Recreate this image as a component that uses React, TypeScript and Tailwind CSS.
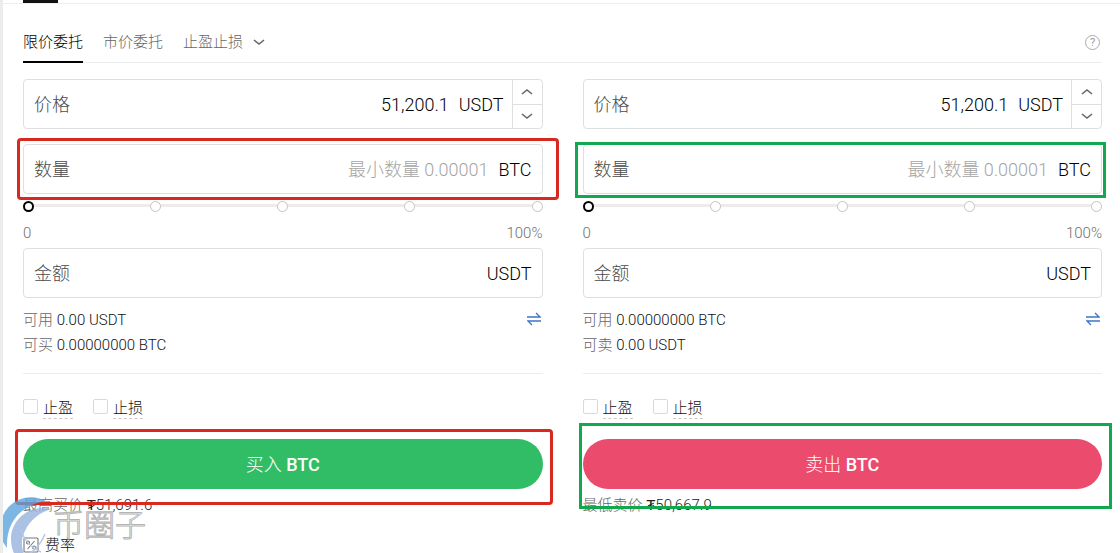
import { useState } from "react";

interface OrderSide {
  id: string;
  available: string;
  maxLabel: string;
  max: string;
  limitLabel: string;
  limit: string;
  action: string;
  buttonClass: string;
  amountMark: string;
  buttonMark: string;
}

const SIDES: OrderSide[] = [
  {
    id: "buy",
    available: "0.00 USDT",
    maxLabel: "可买",
    max: "0.00000000 BTC",
    limitLabel: "最高买价",
    limit: "₮51,691.6",
    action: "买入",
    buttonClass: "bg-[#31bd65]",
    amountMark: "-left-1.5 -right-4 -top-1.5 -bottom-1.5 rounded-sm border-[#d8281f]",
    buttonMark: "-left-2 -right-2.5 -top-2.5 -bottom-4 rounded-sm border-[#d8281f]",
  },
  {
    id: "sell",
    available: "0.00000000 BTC",
    maxLabel: "可卖",
    max: "0.00 USDT",
    limitLabel: "最低卖价",
    limit: "₮50,667.9",
    action: "卖出",
    buttonClass: "bg-[#eb4b6d]",
    amountMark: "-left-2 -right-1 -top-0.5 -bottom-1 border-[#12a84f]",
    buttonMark: "-left-1 -right-2.5 -top-4 -bottom-5 border-[#12a84f]",
  },
];

function Chevron({ up = false }: { up?: boolean }) {
  return (
    <svg viewBox="0 0 12 8" className="h-2 w-3" fill="none" stroke="currentColor" strokeWidth="1.6">
      <path d={up ? "M1 6 6 2l5 4" : "M1 2l5 4 5-4"} />
    </svg>
  );
}

function SwapIcon() {
  return (
    <svg viewBox="0 0 14 14" className="h-3.5 w-3.5" fill="none" stroke="#3d76c9" strokeWidth="1.3">
      <path d="M0 5h13L9 1M14 9H1l4 4" />
    </svg>
  );
}

function Slider({ id }: { id: string }) {
  const [value, setValue] = useState(0);

  return (
    <div className="mt-1.5">
      <div className="relative flex h-3 items-center justify-between">
        <div className="absolute inset-x-1 top-1 h-[3px] bg-[#efebec]" />
        {[0, 25, 50, 75, 100].map((stop) => (
          <span
            key={stop}
            className={
              stop === value
                ? "relative h-[11px] w-[11px] rounded-full border-2 border-black bg-white"
                : "relative h-[11px] w-[11px] rounded-full border border-[#c4c4c4] bg-white"
            }
          />
        ))}
        <input
          type="range"
          min={0}
          max={100}
          step={25}
          value={value}
          onChange={(e) => setValue(Number(e.target.value))}
          aria-label={`${id} percent`}
          className="absolute inset-0 w-full cursor-pointer opacity-0"
        />
      </div>
      <div className="mt-[11px] flex justify-between text-[15px] leading-5 text-[#707070]">
        <span>0</span>
        <span>100%</span>
      </div>
    </div>
  );
}

function OrderForm({ side }: { side: OrderSide }) {
  const [price, setPrice] = useState("51,200.1");
  const box = "flex h-[50px] items-center rounded border border-[#dfdfdf] text-lg";
  const label = "shrink-0 pt-0.5 pl-2.5 text-[#4a4a4a]";
  const field =
    "min-w-0 flex-1 bg-transparent pt-0.5 text-right outline-none placeholder:text-[#a5a5a5]";

  return (
    <form className="min-w-0 flex-1" onSubmit={(e) => e.preventDefault()}>
      <div className={box}>
        <label htmlFor={`${side.id}-price`} className={label}>
          价格
        </label>
        <input
          id={`${side.id}-price`}
          value={price}
          onChange={(e) => setPrice(e.target.value)}
          className={field}
        />
        <span className="pt-0.5 pr-2 pl-2.5">USDT</span>
        <div className="flex h-full w-[30px] flex-col border-l border-[#dfdfdf] text-[#666]">
          <button type="button" aria-label="+" className="flex flex-1 items-center justify-center">
            <Chevron up />
          </button>
          <button
            type="button"
            aria-label="-"
            className="flex flex-1 items-center justify-center border-t border-[#dfdfdf]"
          >
            <Chevron />
          </button>
        </div>
      </div>

      <div className="relative mt-[15px]">
        <div className={box}>
          <label htmlFor={`${side.id}-size`} className={label}>
            数量
          </label>
          <input id={`${side.id}-size`} placeholder="最小数量 0.00001" className={field} />
          <span className="px-2.5 pt-0.5">BTC</span>
        </div>
        <div className={`pointer-events-none absolute border-3 ${side.amountMark}`} />
      </div>

      <Slider id={side.id} />

      <div className={`mt-[5px] ${box}`}>
        <label htmlFor={`${side.id}-total`} className={label}>
          金额
        </label>
        <input id={`${side.id}-total`} className={field} />
        <span className="px-2.5 pt-0.5">USDT</span>
      </div>

      <div className="mt-2.5 flex items-start justify-between text-[15px] leading-[25px] text-[#111]">
        <div>
          <p>
            <span className="text-[#666]">可用</span> {side.available}
          </p>
          <p>
            <span className="text-[#666]">{side.maxLabel}</span> {side.max}
          </p>
        </div>
        <button type="button" aria-label="划转" className="mt-1 mr-0.5">
          <SwapIcon />
        </button>
      </div>

      <hr className="mt-[15px] border-[#ececec]" />

      <div className="mt-[23px] flex gap-5 text-[15px] leading-5 text-[#111]">
        {["止盈", "止损"].map((name) => (
          <label key={name} className="flex items-start gap-[5px]">
            <input
              type="checkbox"
              className="mt-0.5 h-[15px] w-[15px] appearance-none rounded-xs border border-[#d9d9d9] checked:bg-black"
            />
            <span className="border-b border-dashed border-[#c8c8c8] pt-px">{name}</span>
          </label>
        ))}
      </div>

      <div className="relative mt-5">
        <button
          type="submit"
          className={`h-[50px] w-full rounded-full pt-0.5 text-lg text-white ${side.buttonClass}`}
        >
          {side.action} <span className="font-medium">BTC</span>
        </button>
        <div className={`pointer-events-none absolute z-10 border-3 ${side.buttonMark}`} />
      </div>

      <p className="mt-1.5 text-[15px] leading-5 text-[#222]">
        <span className="text-[#666]">{side.limitLabel}</span> {side.limit}
      </p>
    </form>
  );
}

function Watermark() {
  return (
    <div className="pointer-events-none absolute -bottom-2 -left-1 z-20 flex items-center">
      <svg viewBox="0 0 52 64" className="h-16 w-[52px]" fill="none">
        <path d="M47 4C31-5 8 2 2 24c-3 10 0 20 6 27C7 30 17 9 47 4Z" fill="#5ba4df" opacity=".8" />
        <path d="M52 12C30 7 12 23 12 42c0 9 3 16 8 22h9c-7-10-8-21-3-30 5-11 14-18 26-22Z" fill="#96b3df" opacity=".8" />
        <path d="M22 33c4 12 10 18 20 22M46 37c-5 12-12 19-22 23" stroke="#b4c8e8" strokeWidth="1.5" />
      </svg>
      <span className="pb-2 pl-0.5 text-[31px] leading-none text-white/60 [-webkit-text-stroke:1px_#b4b4b4]">
        币圈子
      </span>
    </div>
  );
}

export default function App() {
  return (
    <div className="relative h-screen overflow-hidden border-l-3 border-[#ececec] bg-white font-['Roboto','Noto_Sans_CJK_SC',sans-serif] font-light text-black">
      <div className="h-1 border-b border-[#eee] pl-5">
        <div className="h-[3px] w-[35px] bg-[#111]" />
      </div>

      <div className="pr-[18px] pl-5">
        <nav className="mt-[25px] flex items-start gap-5 border-b border-[#ececec] text-[15px] leading-[26px] text-[#666]">
          <button className="-mb-px border-b-2 border-black pb-1.5 text-black">限价委托</button>
          <button>市价委托</button>
          <button className="flex items-center gap-2.5">
            止盈止损
            <Chevron />
          </button>
          <button
            aria-label="帮助"
            className="mt-1.5 mr-0.5 ml-auto flex h-[15px] w-[15px] items-center justify-center rounded-full border border-[#aaa] text-[11px] leading-none font-normal text-[#999]"
          >
            ?
          </button>
        </nav>

        <div className="mt-4 flex gap-10">
          {SIDES.map((side) => (
            <OrderForm key={side.id} side={side} />
          ))}
        </div>

        <a href="#fees" className="mt-5 flex items-center gap-1.5 text-[15px] leading-5 text-[#111]">
          <svg viewBox="0 0 16 16" className="h-4 w-4" fill="none" stroke="#777" strokeWidth="1.1">
            <rect x="1" y="1" width="14" height="14" rx="1" />
            <path d="m4.5 12 7-8" />
            <circle cx="5" cy="5.5" r="1.5" />
            <circle cx="11" cy="10.5" r="1.5" />
          </svg>
          费率
        </a>
      </div>

      <Watermark />
    </div>
  );
}
